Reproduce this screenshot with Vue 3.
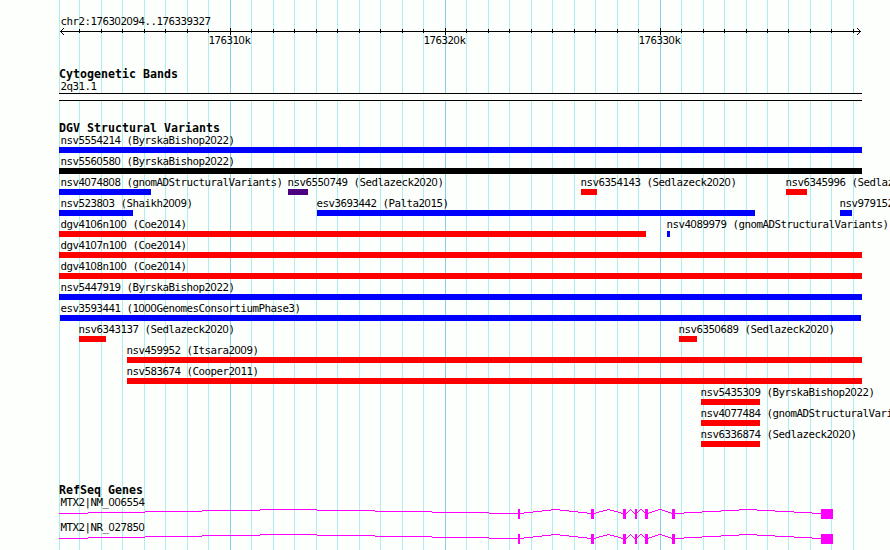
<template>
  <svg class="browser" width="890" height="550" viewBox="0 0 890 550">
    <!-- grid -->
    <rect
      v-for="x in gridLines"
      :key="'grid' + x"
      :x="x"
      y="0"
      width="1"
      height="550"
      :class="majorLines.includes(x) ? 'grid-major' : 'grid-minor'"
    />

    <!-- ruler -->
    <g class="ruler">
      <rect x="60" y="31" width="801" height="1" />
      <rect
        v-for="x in gridLines.slice(1)"
        :key="'tick' + x"
        :x="x"
        :y="majorLines.includes(x) ? 28 : 29"
        width="1"
        :height="majorLines.includes(x) ? 7 : 4"
      />
      <template v-for="i in 3" :key="'arrow' + i">
        <rect :x="60 + i" :y="31 - i" width="1" height="1" />
        <rect :x="60 + i" :y="31 + i" width="1" height="1" />
        <rect :x="860 - i" :y="31 - i" width="1" height="1" />
        <rect :x="860 - i" :y="31 + i" width="1" height="1" />
      </template>
    </g>

    <!-- cytoband -->
    <rect class="band" x="59" y="93" width="803" height="8" />
    <rect x="59" y="93" width="803" height="1" />
    <rect x="59" y="100" width="803" height="1" />

    <!-- structural variants -->
    <template v-for="(row, i) in variants" :key="'row' + i">
      <rect
        v-for="item in row"
        :key="item.name"
        :x="item.start"
        :y="147 + i * 21"
        :width="item.end - item.start"
        height="6"
        :class="item.type"
      />
    </template>

    <!-- genes -->
    <g v-for="gene in genes" :key="gene.name" class="gene">
      <path :d="introns(gene.y)" />
      <rect
        v-for="exon in exons"
        :key="exon[0]"
        :x="exon[0]"
        :y="gene.y"
        :width="exon[1] - exon[0]"
        height="10"
      />
    </g>

    <text
      v-for="title in titles"
      :key="title.text"
      class="title"
      :x="charX(title.text, 59, 7)"
      :y="title.y"
    >{{ title.text }}</text>

    <text
      v-for="label in labels"
      :key="label.text"
      class="label"
      :x="charX(label.text, label.x, 6)"
      :y="label.y"
    ><tspan v-for="(part, i) in label.text.split(/(0+)/)" :key="i" :class="{ zero: part[0] === '0' }">{{ part }}</tspan></text>
  </svg>
</template>

<script setup>
const gridLines = [
  59, 79, 101, 122, 144, 165, 187, 208, 230, 251, 273, 294, 316, 337, 359, 380, 402, 423, 445,
  466, 488, 509, 531, 552, 574, 595, 617, 638, 660, 681, 703, 724, 746, 767, 788, 810, 831, 853,
];
const majorLines = [230, 445, 660];

const titles = [
  { text: "Cytogenetic Bands", y: 78 },
  { text: "DGV Structural Variants", y: 132 },
  { text: "RefSeq Genes", y: 494 },
];

const v = (name, start, end, type) => ({ name, start, end, type });

const variants = [
  [v("nsv5554214 (ByrskaBishop2022)", 59, 862, "gain")],
  [v("nsv5560580 (ByrskaBishop2022)", 59, 862, "other")],
  [
    v("nsv4074808 (gnomADStructuralVariants)", 59, 151, "gain"),
    v("nsv6550749 (Sedlazeck2020)", 288, 308, "inversion"),
    v("nsv6354143 (Sedlazeck2020)", 581, 597, "loss"),
    v("nsv6345996 (Sedlazeck2020)", 786, 807, "loss"),
  ],
  [
    v("nsv523803 (Shaikh2009)", 59, 133, "gain"),
    v("esv3693442 (Palta2015)", 317, 755, "gain"),
    v("nsv979152", 840, 852, "gain"),
  ],
  [
    v("dgv4106n100 (Coe2014)", 59, 646, "loss"),
    v("nsv4089979 (gnomADStructuralVariants)", 667, 670, "gain"),
  ],
  [v("dgv4107n100 (Coe2014)", 59, 862, "loss")],
  [v("dgv4108n100 (Coe2014)", 59, 862, "loss")],
  [v("nsv5447919 (ByrskaBishop2022)", 59, 862, "gain")],
  [v("esv3593441 (1000GenomesConsortiumPhase3)", 60, 861, "gain")],
  [
    v("nsv6343137 (Sedlazeck2020)", 79, 106, "loss"),
    v("nsv6350689 (Sedlazeck2020)", 679, 697, "loss"),
  ],
  [v("nsv459952 (Itsara2009)", 127, 862, "loss")],
  [v("nsv583674 (Cooper2011)", 127, 862, "loss")],
  [v("nsv5435309 (ByrskaBishop2022)", 701, 760, "loss")],
  [v("nsv4077484 (gnomADStructuralVariants)", 701, 760, "loss")],
  [v("nsv6336874 (Sedlazeck2020)", 701, 760, "loss")],
];

const genes = [
  { name: "MTX2|NM_006554", y: 509 },
  { name: "MTX2|NR_027850", y: 534 },
];

const exons = [
  [518, 520],
  [591, 594],
  [623, 626],
  [635, 637],
  [645, 648],
  [672, 675],
  [821, 833],
];

const labels = [
  { text: "chr2:176302094..176339327", x: 60.4, y: 25 },
  { text: "176310k", x: 208.4, y: 44 },
  { text: "176320k", x: 423.4, y: 44 },
  { text: "176330k", x: 638.4, y: 44 },
  { text: "2q31.1", x: 60.4, y: 90 },
  ...variants.flatMap((row, i) =>
    row.map((item) => ({
      text: item.name,
      x: item.start <= 60 ? 60.4 : item.start - 0.6,
      y: 144 + i * 21,
    }))
  ),
  ...genes.map((gene) => ({ text: gene.name, x: 60.4, y: gene.y - 3 })),
];

// fixed character cells
const charX = (text, start, step) => [...text].map((c, i) => start + i * step).join(" ");

// hat-shaped connectors between neighbouring exons, in whole-pixel steps
const introns = (y) => {
  let d = "";
  exons.forEach(([end], i) => {
    const start = i ? exons[i - 1][1] : 59;
    const half = (end - start) / 2;
    for (let x = start; x < end; x++) {
      const rise = 4 * (1 - Math.abs(x + 0.5 - start - half) / half);
      d += `M${x} ${y + 4 - Math.round(rise)}h1v1h-1z`;
    }
  });
  return d;
};
</script>

<style scoped>
.browser {
  display: block;
  background: #fdfffc;
  shape-rendering: crispEdges;
}
.grid-minor {
  fill: #afeeee;
}
.grid-major {
  fill: #87ceeb;
}
.band {
  fill: #fdfffc;
}
.gain {
  fill: #00f;
}
.loss {
  fill: #f00;
}
.inversion {
  fill: #4b0082;
}
.other {
  fill: #000;
}
.gene {
  fill: #f0f;
}
.label {
  font: 10.8px "DejaVu Sans Mono", monospace;
}
.zero {
  font-family: "Liberation Sans", sans-serif;
  font-size: 11px;
}
.title {
  font: bold 11.6px "DejaVu Sans Mono", monospace;
}
</style>

<style>
body {
  background: #fdfffc;
  overflow: hidden;
}
</style>
